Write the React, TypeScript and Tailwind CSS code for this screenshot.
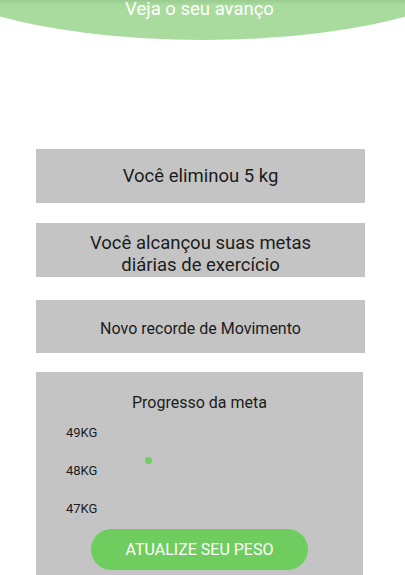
import React from 'react'

const ProgressScreen = () => {
  return (
    <div className="w-[405px] min-h-[575px] bg-white font-['Roboto',sans-serif] text-[#1c1c1c]">
      <div className="h-[40px] overflow-hidden flex justify-center">
        <div className="w-[600px] h-[178px] shrink-0 mt-[-138px] rounded-[50%] bg-[linear-gradient(to_bottom,#a8db9d_0px,#a8db9d_134px,#9acb8f_138px,#a8db9d_143px)] flex flex-col justify-end items-center pb-[20px]">
          <span className="text-white text-[18.5px] leading-[22px] -translate-x-[3px]">Veja o seu avanço</span>
        </div>
      </div>

      <div className="mt-[109px] ml-[36px] w-[329px] flex flex-col">
        <div className="h-[54px] bg-[#c4c4c4] flex items-center justify-center text-[18.5px] leading-[21px]">
          Você eliminou 5 kg
        </div>
        <div className="mt-[20px] h-[54px] bg-[#c4c4c4] flex items-center justify-center text-center text-[18.5px] leading-[22px] pt-[8px]">
          Você alcançou suas metas<br />diárias de exercício
        </div>
        <div className="mt-[23px] h-[53px] bg-[#c4c4c4] flex items-center justify-center text-[16px] leading-[19px] pt-[4px]">
          Novo recorde de Movimento
        </div>
        <div className="mt-[19px] w-[327px] bg-[#c4c4c4] pt-[21px] pb-[12px] flex flex-col">
          <div className="text-center text-[16px] leading-[19px]">Progresso da meta</div>
          <div className="relative mt-[13px] pl-[30px] flex flex-col gap-[22px] text-[13px] leading-[16px]">
            <span>49KG</span>
            <span>48KG</span>
            <span>47KG</span>
            <div className="absolute left-[109px] top-[32px] w-[7px] h-[7px] rounded-full bg-[#6fcd5f]" />
          </div>
          <button className="mt-[12px] mx-auto w-[217px] h-[41px] rounded-full bg-[#6fcd5f] text-white text-[16px] leading-[19px]">
            ATUALIZE SEU PESO
          </button>
        </div>
      </div>
    </div>
  )
}

export default function App() {
  return <ProgressScreen />
}
